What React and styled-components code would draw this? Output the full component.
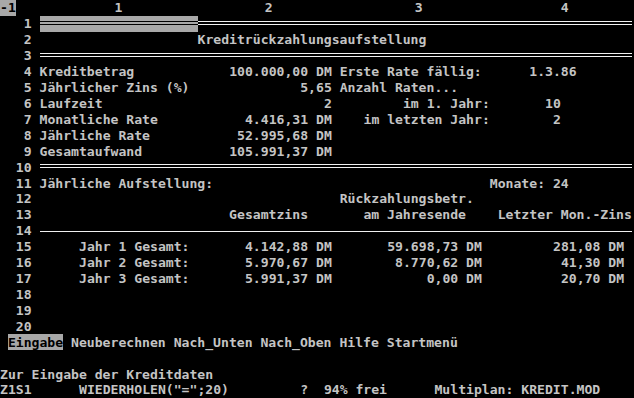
import styled, { createGlobalStyle } from "styled-components";

// one text cell of the 80x25 screen
const CW = 7.9;
const ch = (n) => `${(n * CW).toFixed(2)}px`;

const Global = createGlobalStyle`
  html, body {
    margin: 0;
    padding: 0;
    background: #000;
  }
`;

const Screen = styled.div`
  width: 634px;
  height: 398px;
  background: #000;
  color: #c4c4c4;
  font-family: "DejaVu Sans Mono", "Liberation Mono", monospace;
  font-size: 13.12px;
  font-weight: bold;
  display: grid;
  grid-template-rows: repeat(25, 1fr);
  overflow: hidden;
  white-space: pre;
`;

const Line = styled.div`
  display: flex;
  align-items: center;
  line-height: 1;
  padding-left: ${(p) => ch(p.$indent || 0)};
`;

const CornerTag = styled.div`
  width: ${ch(2)};
  align-self: stretch;
  display: flex;
  align-items: center;
  background: #a8a8a8;
  color: #000;
`;

const ColHead = styled.div`
  width: ${(p) => ch(p.$w)};
  text-align: center;
`;

const RowNum = styled.div`
  width: ${ch(5)};
  text-align: right;
  padding-right: ${ch(1)};
  box-sizing: border-box;
`;

const Cell = styled.div`
  width: ${(p) => ch(p.$w)};
  flex: none;
  box-sizing: border-box;
  text-align: ${(p) => p.$align || "left"};
  padding-left: ${(p) => ch(p.$pl || 0)};
  padding-right: ${(p) => ch(p.$pr || 0)};
  overflow: visible;
`;

const Title = styled.div`
  padding-left: ${ch(20)};
`;

const Rule = styled.div`
  align-self: stretch;
  width: ${(p) => ch(p.$w)};
  position: relative;
  background: ${(p) => (p.$selected ? "#a8a8a8" : "transparent")};
  &::before,
  &::after {
    content: "";
    position: absolute;
    left: 0;
    right: 0;
    height: 1px;
    background: ${(p) => (p.$selected ? "#000" : "#f0f0f0")};
  }
  &::before {
    top: ${(p) => (p.$double ? "5px" : "8px")};
  }
  &::after {
    top: 8px;
    display: ${(p) => (p.$double ? "block" : "none")};
  }
`;

const Menu = styled.div`
  display: flex;
  gap: ${ch(1)};
  padding-left: ${ch(1)};
  align-items: stretch;
`;

const MenuItem = styled.span`
  display: flex;
  align-items: center;
  background: ${(p) => (p.$active ? "#a8a8a8" : "transparent")};
  color: ${(p) => (p.$active ? "#000" : "inherit")};
`;

const Field = styled.div`
  width: ${(p) => (p.$w ? ch(p.$w) : "auto")};
  flex: none;
`;

const W = [20, 18, 20, 17];

const rows = [
  null,
  null,
  null,
  null,
  [
    { t: "Kreditbetrag" },
    { t: "100.000,00 DM", a: "right", pr: 1 },
    { t: "Erste Rate fällig:" },
    { t: "1.3.86", pl: 4 },
  ],
  [
    { t: "Jährlicher Zins (%)" },
    { t: "5,65", a: "right", pr: 1 },
    { t: "Anzahl Raten..." },
    { t: "" },
  ],
  [
    { t: "Laufzeit" },
    { t: "2", a: "right", pr: 1 },
    { t: "im 1. Jahr:", a: "right", pr: 1 },
    { t: "10", pl: 6 },
  ],
  [
    { t: "Monatliche Rate" },
    { t: "4.416,31 DM", a: "right", pr: 1 },
    { t: "im letzten Jahr:", a: "right", pr: 1 },
    { t: "2", pl: 7 },
  ],
  [{ t: "Jährliche Rate" }, { t: "52.995,68 DM", a: "right", pr: 1 }, { t: "" }, { t: "" }],
  [{ t: "Gesamtaufwand" }, { t: "105.991,37 DM", a: "right", pr: 1 }, { t: "" }, { t: "" }],
  null,
  [{ t: "Jährliche Aufstellung:" }, { t: "" }, { t: "Monate: 24", pl: 19 }, { t: "" }],
  [{ t: "" }, { t: "" }, { t: "Rückzahlungsbetr." }, { t: "" }],
  [{ t: "" }, { t: "Gesamtzins", pl: 4 }, { t: "am Jahresende", pl: 3 }, { t: "Letzter Mon.-Zins" }],
  null,
  [
    { t: "Jahr 1 Gesamt:", pl: 5 },
    { t: "4.142,88 DM", a: "right", pr: 1 },
    { t: "59.698,73 DM", a: "right", pr: 2 },
    { t: "281,08 DM", a: "right", pr: 1 },
  ],
  [
    { t: "Jahr 2 Gesamt:", pl: 5 },
    { t: "5.970,67 DM", a: "right", pr: 1 },
    { t: "8.770,62 DM", a: "right", pr: 2 },
    { t: "41,30 DM", a: "right", pr: 1 },
  ],
  [
    { t: "Jahr 3 Gesamt:", pl: 5 },
    { t: "5.991,37 DM", a: "right", pr: 1 },
    { t: "0,00 DM", a: "right", pr: 2 },
    { t: "20,70 DM", a: "right", pr: 1 },
  ],
  [],
  [],
  [],
];

const SheetRow = ({ n }) => {
  const data = rows[n];
  if (n === 1) {
    return (
      <Line>
        <RowNum>{n}</RowNum>
        <Rule $w={20} $double $selected />
        <Rule $w={55} $double />
      </Line>
    );
  }
  if (n === 2) {
    return (
      <Line>
        <RowNum>{n}</RowNum>
        <Title>Kreditrückzahlungsaufstellung</Title>
      </Line>
    );
  }
  if (n === 3 || n === 10 || n === 14) {
    return (
      <Line>
        <RowNum>{n}</RowNum>
        <Rule $w={75} $double={n !== 14} />
      </Line>
    );
  }
  return (
    <Line>
      <RowNum>{n}</RowNum>
      {data.map((c, i) => (
        <Cell key={i} $w={W[i]} $align={c.a} $pl={c.pl} $pr={c.pr}>
          {c.t}
        </Cell>
      ))}
    </Line>
  );
};

const menu = ["Eingabe", "Neuberechnen", "Nach_Unten", "Nach_Oben", "Hilfe", "Startmenü"];

export default function App() {
  return (
    <>
      <Global />
      <Screen>
        <Line>
          <CornerTag>-1</CornerTag>
          <Field $w={3} />
          <ColHead $w={20}>1</ColHead>
          <ColHead $w={18}>2</ColHead>
          <ColHead $w={20}>3</ColHead>
          <ColHead $w={17}>4</ColHead>
        </Line>
        {Array.from({ length: 20 }, (_, i) => (
          <SheetRow key={i} n={i + 1} />
        ))}
        <Menu>
          {menu.map((m, i) => (
            <MenuItem key={m} $active={i === 0}>
              {m}
            </MenuItem>
          ))}
        </Menu>
        <Line />
        <Line>Zur Eingabe der Kreditdaten</Line>
        <Line>
          <Field $w={10}>Z1S1</Field>
          <Field $w={28}>WIEDERHOLEN("=";20)</Field>
          <Field $w={3}>?</Field>
          <Field $w={14}>94% frei</Field>
          <Field>Multiplan: KREDIT.MOD</Field>
        </Line>
      </Screen>
    </>
  );
}
